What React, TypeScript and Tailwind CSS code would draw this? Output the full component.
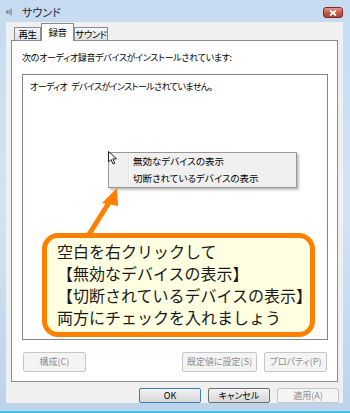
import React from "react";

// ダイアログ内の小さい文字はプロポーショナル詰め
const jp = "font-['Noto_Sans_CJK_JP',sans-serif]";
const palt = "[font-feature-settings:'palt']";

function Tab({ label, active, w }: { label: string; active?: boolean; w: string }) {
  return (
    <div
      className={
        active
          ? `${w} h-[18px] z-10 -mb-px bg-white border border-b-0 border-[#898c95] flex items-center justify-center whitespace-nowrap text-[9.5px] tracking-[-0.5px] text-black ${palt}`
          : `${w} h-[13px] bg-gradient-to-b from-[#f6f6f6] to-[#e1e1e1] border border-b-0 border-[#898c95] flex items-center justify-center whitespace-nowrap text-[9.5px] tracking-[-0.5px] text-black ${palt}`
      }
    >
      {label}
    </div>
  );
}

function Btn({ label, w, disabled, isDefault }: { label: string; w: string; disabled?: boolean; isDefault?: boolean }) {
  if (disabled) {
    return (
      <div className={`${w} h-full rounded-[2px] border border-[#c6c6c6] bg-[#f4f4f4] flex items-center justify-center text-[9px] text-[#8d8d8d] ${palt}`}>
        {label}
      </div>
    );
  }
  return (
    <div
      className={`${w} h-full rounded-[2px] border ${isDefault ? "border-[#3c7fb1]" : "border-[#707070]"} bg-gradient-to-b from-[#f2f2f2] to-[#d8d8d8] flex items-center justify-center text-[9px] text-black ${palt}`}
    >
      {label}
    </div>
  );
}

export default function App() {
  return (
    <div className={`relative w-[350px] h-[413px] overflow-hidden bg-gradient-to-b from-[#c6dbf1] via-[#d3e3f3] to-[#bcd3eb] ${jp} flex flex-col`}>
      {/* タイトルバー */}
      <div className="h-[22px] flex items-center relative">
        <svg width="10" height="10" viewBox="0 0 10 10" className="ml-[5px] mt-[2px]">
          <rect x="1" y="3.5" width="2.5" height="3" fill="#7d8790" />
          <path d="M3.5 3.5 L7 1 L7 9 L3.5 6.5 Z" fill="#9aa3ab" />
        </svg>
        <span className={`ml-[7px] mt-[2px] text-[11px] text-[#1b2a3a] ${palt}`}>サウンド</span>
        <div className="absolute right-[7px] top-[7px] w-[20px] h-[11px] rounded-[3px] border border-[#7a2a24] bg-gradient-to-b from-[#e49a8c] via-[#c9584a] to-[#b8402f] flex items-center justify-center">
          <svg width="8" height="6" viewBox="0 0 8 6">
            <path d="M1 0.5 L7 5.5 M7 0.5 L1 5.5" stroke="white" strokeWidth="1.8" />
          </svg>
        </div>
      </div>

      {/* クライアント領域 */}
      <div className="ml-[6px] mr-[7px] h-[381px] bg-[#f0f0f0] border-l border-r border-[#eaf2fb] flex flex-col">
        <div className="h-[18px] flex items-end pl-[7px]">
          <Tab label="再生" w="w-[27px]" />
          <Tab label="録音" w="w-[33px]" active />
          <Tab label="サウンド" w="w-[34px]" />
        </div>
        <div className="mx-[4px] h-[342px] bg-white border border-[#898c95] flex flex-col pl-[10px]">
          <div className={`pt-[11px] h-[23px] text-[9px] leading-[12px] tracking-[-0.3px] text-black whitespace-nowrap ${palt}`}>
            次のオーディオ録音デバイスがインストールされています:
          </div>
          <div className="mt-[10px] w-[306px] h-[266px] border border-[#828790] bg-white pl-[7px] pt-[6px]">
            <div className={`text-[9px] leading-[12px] tracking-[-0.6px] text-black whitespace-nowrap ${palt}`}>
              オーディオ<span className="inline-block w-[4px]" />デバイスがインストールされていません。
            </div>
          </div>
          <div className="mt-[12px] h-[20px] flex pl-[1px]">
            <Btn label="構成(C)" w="w-[63px]" disabled />
            <div className="flex-1" />
            <Btn label="既定値に設定(S)" w="w-[75px]" disabled />
            <div className="w-[7px]" />
            <Btn label="プロパティ(P)" w="w-[63px]" disabled />
            <div className="w-[10px]" />
          </div>
        </div>
        <div className="mt-[6px] h-[15px] flex justify-end gap-[7px] pr-[3px]">
          <Btn label="OK" w="w-[62px]" isDefault />
          <Btn label="キャンセル" w="w-[62px]" />
          <Btn label="適用(A)" w="w-[62px]" disabled />
        </div>
      </div>
      <div className="flex-1" />
      <div className="h-[2px] bg-[#3fc3e6]" />

      {/* 右クリックメニュー */}
      <div className="absolute left-[108px] top-[152px] w-[189px] h-[36px] bg-[#f0f0f0] border border-[#979797] flex shadow-[2px_2px_2px_rgba(0,0,0,0.25)]">
        <div className="w-[20px] border-r border-[#e2e3e3]" />
        <div className="w-px bg-white" />
        <div className={`flex flex-col pl-[3px] text-[9.5px] text-black ${palt}`}>
          <div className="h-[17px] flex items-center">無効なデバイスの表示</div>
          <div className="h-[17px] flex items-center">切断されているデバイスの表示</div>
        </div>
      </div>

      {/* マウスカーソル */}
      <svg className="absolute left-[108px] top-[151px]" width="11" height="14" viewBox="0 0 11 14">
        <path d="M0.5 0.5 L0.5 11 L3 8.5 L5 13 L6.8 12.2 L4.9 7.8 L8.5 7.8 Z" fill="white" stroke="#222" strokeWidth="1" />
      </svg>

      {/* 吹き出し */}
      <svg className="absolute left-0 top-0 pointer-events-none" width="350" height="413">
        <line x1="88" y1="236" x2="110" y2="201" stroke="#ff8000" strokeWidth="5" />
        <polygon points="117,188 102,203 118,206" fill="#ff8000" />
      </svg>
      <div className="absolute left-[42px] top-[233px] w-[273px] h-[104px] rounded-[16px] border-[5px] border-[#ff8000] bg-[#ffffe1] pl-[10px] pt-[2px] text-[16px] leading-[22px] text-[#1a1a1a]">
        <div>空白を右クリックして</div>
        <div>【無効なデバイスの表示】</div>
        <div>【切断されているデバイスの表示】</div>
        <div>両方にチェックを入れましょう</div>
      </div>
    </div>
  );
}
